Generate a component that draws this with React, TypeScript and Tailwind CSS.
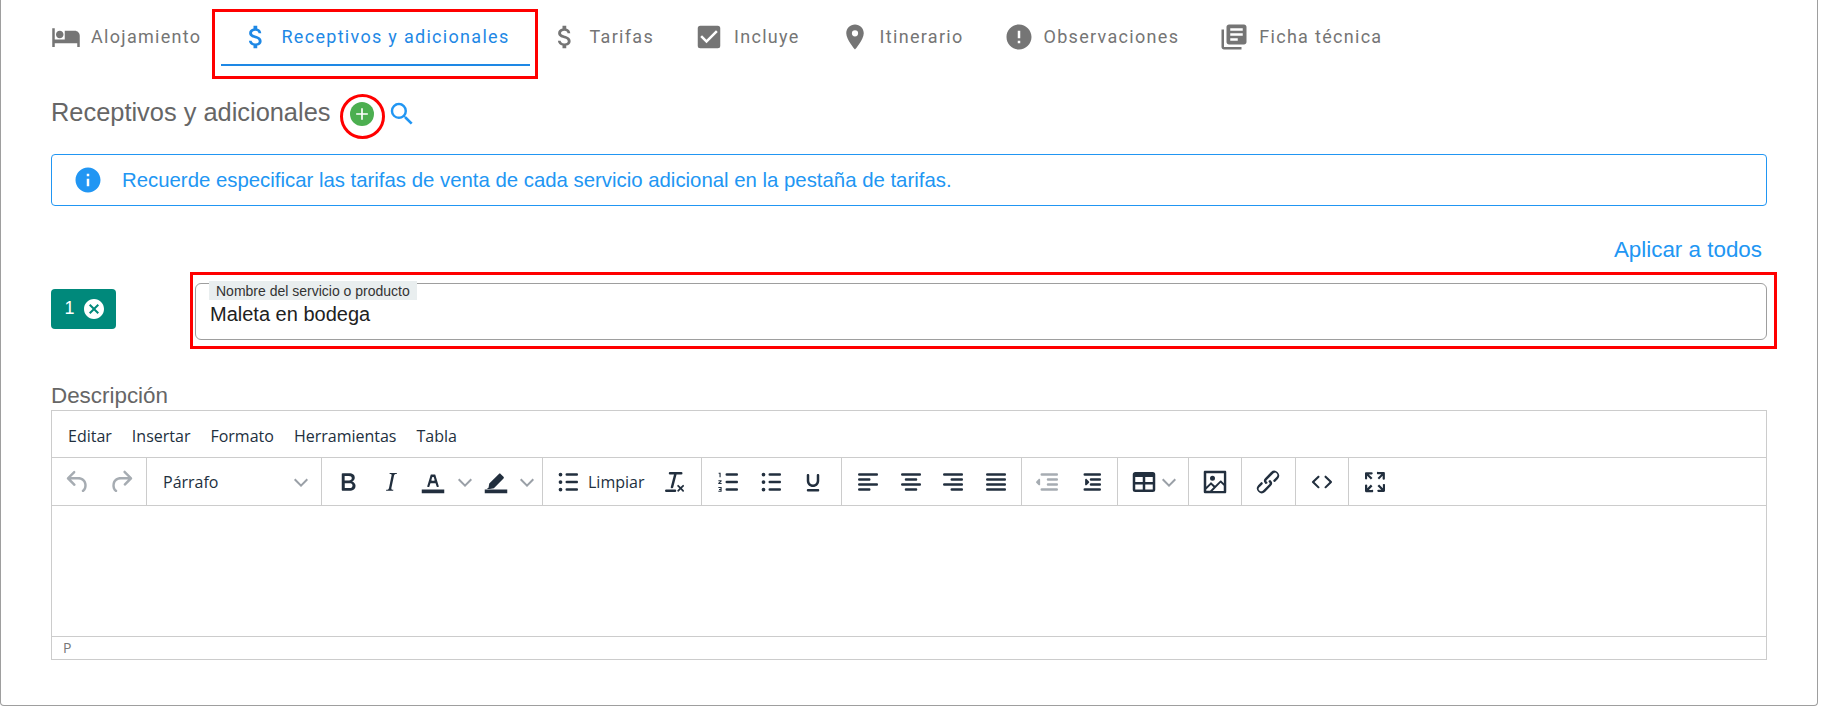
import {
  MdHotel,
  MdAttachMoney,
  MdCheckBox,
  MdLocationOn,
  MdError,
  MdLibraryBooks,
  MdSearch,
  MdInfo,
  MdCancel,
  MdAdd,
} from 'react-icons/md';
import type { ReactNode } from 'react';

const tabs = [
  { label: 'Alojamiento', icon: MdHotel },
  { label: 'Receptivos y adicionales', icon: MdAttachMoney, active: true },
  { label: 'Tarifas', icon: MdAttachMoney },
  { label: 'Incluye', icon: MdCheckBox },
  { label: 'Itinerario', icon: MdLocationOn },
  { label: 'Observaciones', icon: MdError },
  { label: 'Ficha técnica', icon: MdLibraryBooks },
];

const Icon = ({ d, faded }: { d: string; faded?: boolean }) => (
  <svg viewBox="0 0 24 24" className={`w-[30px] h-[30px] ${faded ? 'fill-[#a6acb2]' : 'fill-[#222f3e]'}`}>
    <path d={d} />
  </svg>
);

const Btn = ({ d, faded }: { d: string; faded?: boolean }) => (
  <div className="w-[42.5px] h-[38px] flex items-center justify-center shrink-0">
    <Icon d={d} faded={faded} />
  </div>
);

const Chevron = () => (
  <div className="w-[20px] flex justify-center shrink-0">
    <svg viewBox="0 0 10 10" className="w-[18px] h-[18px] fill-none stroke-[#9aa0a7] stroke-[1.1]">
      <path d="M1.500 3.500 5 7l3.500-3.500" />
    </svg>
  </div>
);

const Group = ({ w, last, children }: { w: string; last?: boolean; children: ReactNode }) => (
  <div className={`${w} ${last ? '' : 'border-r border-[#ccc]'} h-full pl-[5px] pt-[1px] flex items-center shrink-0`}>
    {children}
  </div>
);

const icons = {
  undo: 'M6.4 8H12c3.7 0 6.2 2 6.8 5.1.6 2.7-.4 5.6-2.3 6.8a1 1 0 0 1-1-1.8c1.1-.6 1.8-2.7 1.4-4.6-.5-2.1-2.1-3.5-4.9-3.5H6.4l3.3 3.3a1 1 0 1 1-1.4 1.4l-5-5a1 1 0 0 1 0-1.4l5-5a1 1 0 0 1 1.4 1.4L6.4 8z',
  redo: 'M17.6 10H12c-2.8 0-4.4 1.4-4.9 3.5-.4 2 .3 4 1.4 4.6a1 1 0 1 1-1 1.8c-2-1.2-2.9-4.1-2.3-6.8.6-3 3-5.1 6.8-5.1h5.6l-3.3-3.3a1 1 0 1 1 1.4-1.4l5 5a1 1 0 0 1 0 1.4l-5 5a1 1 0 0 1-1.4-1.4l3.3-3.3z',
  bold: 'M7.8 19c-.3 0-.5 0-.6-.2l-.2-.5V5.7c0-.2 0-.4.2-.5l.6-.2h5c1.5 0 2.7.3 3.5 1 .7.6 1.1 1.4 1.1 2.5a3 3 0 0 1-.6 1.9c-.4.6-1 1-1.6 1.2.4.1.9.3 1.3.6s.8.7 1 1.2c.4.4.5 1 .5 1.6 0 1.3-.4 2.3-1.3 3-.8.7-2.1 1-3.8 1H7.8zm5-8.3c.6 0 1.2-.1 1.6-.5.4-.3.6-.7.6-1.3 0-1.1-.8-1.7-2.3-1.7H9.3v3.5h3.4zm.5 6c.7 0 1.3-.1 1.7-.4.4-.4.6-.9.6-1.5s-.2-1-.7-1.4c-.4-.3-1-.4-2-.4H9.4v3.8h4z',
  italic: 'M16.7 4.7l-.1.9h-.3c-.6 0-1 0-1.4.3-.3.3-.4.6-.5 1.1l-2.1 9.8v.6c0 .5.4.8 1.4.8h.2l-.2.8H8l.2-.8h.2c1.1 0 1.8-.5 2-1.5l2-9.8.1-.5c0-.6-.4-.8-1.4-.8h-.3l.2-.9h5.8z',
  textColor: 'M3 18h18v3H3zM8.7 16h-.8a.5.5 0 0 1-.5-.6l2.7-9c.1-.3.3-.4.5-.4h2.8c.2 0 .4.1.5.4l2.7 9a.5.5 0 0 1-.5.6h-.8a.5.5 0 0 1-.4-.4l-.7-2.2c0-.3-.3-.4-.5-.4h-3.4c-.2 0-.4.1-.5.4l-.7 2.2c0 .3-.2.4-.4.4zm2.6-7.6l-.6 2a.5.5 0 0 0 .5.6h1.600a.5.5 0 0 0 .5-.6l-.6-2c0-.3-.3-.4-.5-.4h-.4c-.2 0-.4.1-.5.4z',
  highlight: 'M3 18h18v3H3zM6 16.500l.6-3.300 7.700-7.700c.4-.4 1-.4 1.400 0l2.300 2.300c.4.4.4 1 0 1.400l-7.700 7.700-3.300.6H4.600z',
  list: 'M11 5h8c.6 0 1 .4 1 1s-.4 1-1 1h-8a1 1 0 0 1 0-2zm0 6h8c.6 0 1 .4 1 1s-.4 1-1 1h-8a1 1 0 0 1 0-2zm0 6h8c.6 0 1 .4 1 1s-.4 1-1 1h-8a1 1 0 0 1 0-2zM6 4.500a1.500 1.500 0 1 1 0 3 1.500 1.500 0 0 1 0-3zm0 6a1.500 1.500 0 1 1 0 3 1.500 1.500 0 0 1 0-3zm0 6a1.500 1.500 0 1 1 0 3 1.500 1.500 0 0 1 0-3z',
  olist: 'M11 5h8c.6 0 1 .4 1 1s-.4 1-1 1h-8a1 1 0 0 1 0-2zm0 6h8c.6 0 1 .4 1 1s-.4 1-1 1h-8a1 1 0 0 1 0-2zm0 6h8c.6 0 1 .4 1 1s-.4 1-1 1h-8a1 1 0 0 1 0-2zM4.500 4.500h1.600v3.600h-.9V5.300h-.7zM4.300 10.500h2.600v.9L5.500 12.700h1.400v.8H4.200v-.8l1.600-1.400H4.300zM4.300 16h2.600v3.800H4.300v-.8h1.700v-.7H4.800v-.7h1.200v-.8H4.300z',
  clear: 'M13.200 6a1 1 0 0 1 0 .2l-2.600 10a1 1 0 0 1-1 .8h-.2a.8.8 0 0 1-.8-1l2.600-10H8a1 1 0 1 1 0-2h9a1 1 0 0 1 0 2h-3.800zM5 18h7a1 1 0 0 1 0 2H5a1 1 0 0 1 0-2zm13 1.500L16.500 18 15 19.500a.7.7 0 0 1-1-1l1.500-1.500-1.500-1.500a.7.7 0 0 1 1-1l1.500 1.500 1.500-1.500a.7.7 0 0 1 1 1L17.500 17l1.500 1.500a.7.7 0 0 1-1 1z',
  underline: 'M16 5.500c.6 0 1 .4 1 1V11c0 2.800-2.200 5-5 5s-5-2.200-5-5V6.500c0-.6.4-1 1-1s1 .4 1 1V11c0 1.700 1.300 3 3 3s3-1.300 3-3V6.500c0-.6.4-1 1-1zM8 17.600h8c.6 0 1 .4 1 1s-.4 1-1 1H8a1 1 0 0 1 0-2z',
  alignLeft: 'M5 5h14c.6 0 1 .4 1 1s-.4 1-1 1H5a1 1 0 1 1 0-2zm0 4h8c.6 0 1 .4 1 1s-.4 1-1 1H5a1 1 0 0 1 0-2zm0 8h8c.6 0 1 .4 1 1s-.4 1-1 1H5a1 1 0 0 1 0-2zm0-4h14c.6 0 1 .4 1 1s-.4 1-1 1H5a1 1 0 0 1 0-2z',
  alignCenter: 'M5 5h14c.6 0 1 .4 1 1s-.4 1-1 1H5a1 1 0 1 1 0-2zm3 4h8c.6 0 1 .4 1 1s-.4 1-1 1H8a1 1 0 1 1 0-2zm0 8h8c.6 0 1 .4 1 1s-.4 1-1 1H8a1 1 0 0 1 0-2zm-3-4h14c.6 0 1 .4 1 1s-.4 1-1 1H5a1 1 0 0 1 0-2z',
  alignRight: 'M5 5h14c.6 0 1 .4 1 1s-.4 1-1 1H5a1 1 0 1 1 0-2zm6 4h8c.6 0 1 .4 1 1s-.4 1-1 1h-8a1 1 0 0 1 0-2zm0 8h8c.6 0 1 .4 1 1s-.4 1-1 1h-8a1 1 0 0 1 0-2zm-6-4h14c.6 0 1 .4 1 1s-.4 1-1 1H5a1 1 0 0 1 0-2z',
  justify: 'M5 5h14c.6 0 1 .4 1 1s-.4 1-1 1H5a1 1 0 1 1 0-2zm0 4h14c.6 0 1 .4 1 1s-.4 1-1 1H5a1 1 0 1 1 0-2zm0 4h14c.6 0 1 .4 1 1s-.4 1-1 1H5a1 1 0 0 1 0-2zm0 4h14c.6 0 1 .4 1 1s-.4 1-1 1H5a1 1 0 0 1 0-2z',
  outdent: 'M7 5h12c.6 0 1 .4 1 1s-.4 1-1 1H7a1 1 0 1 1 0-2zm5 4h7c.6 0 1 .4 1 1s-.4 1-1 1h-7a1 1 0 0 1 0-2zm0 4h7c.6 0 1 .4 1 1s-.4 1-1 1h-7a1 1 0 0 1 0-2zm-5 4h12a1 1 0 0 1 0 2H7a1 1 0 0 1 0-2zm-2.600-2.600L2.800 12.800a1 1 0 0 1 0-1.500L4.400 9.700c.5-.5 1.300-.2 1.300.5v3.700c0 .7-.8 1-1.300.5z',
  indent: 'M7 5h12c.6 0 1 .4 1 1s-.4 1-1 1H7a1 1 0 1 1 0-2zm5 4h7c.6 0 1 .4 1 1s-.4 1-1 1h-7a1 1 0 0 1 0-2zm0 4h7c.6 0 1 .4 1 1s-.4 1-1 1h-7a1 1 0 0 1 0-2zm-5 4h12a1 1 0 0 1 0 2H7a1 1 0 0 1 0-2zm1.600-2.600l1.600-1.600a1 1 0 0 0 0-1.500L8.600 9.700c-.5-.5-1.300-.2-1.300.5v3.700c0 .7.8 1 1.300.5z',
  table: 'M19 4a2 2 0 0 1 2 2v12a2 2 0 0 1-2 2H5a2 2 0 0 1-2-2V6c0-1.100.9-2 2-2h14zM5 14v4h6v-4H5zm14 0h-6v4h6v-4zm0-6h-6v4h6V8zM5 12h6V8H5v4z',
  image: 'M5 15.700l3.300-3.200c.3-.3.7-.3 1 0L12 15l4.100-4c.3-.4.8-.4 1 0l2 1.900V5H5v10.700zM5 18V19h3l2.800-2.900-2-2L5 17.900zm14-3l-2.500-2.400-6.400 6.500H19v-4zM4 3h16c.6 0 1 .4 1 1v16c0 .6-.4 1-1 1H4a1 1 0 0 1-1-1V4c0-.6.4-1 1-1zm6 8a2 2 0 1 0 0-4 2 2 0 0 0 0 4z',
  link: 'M6.200 12.300a1 1 0 0 1 1.400 1.400l-2 2a2 2 0 1 0 2.600 2.800l4.800-4.800a1 1 0 0 0 0-1.400 1 1 0 1 1 1.400-1.300 2.900 2.900 0 0 1 0 4L9.600 20a3.900 3.900 0 0 1-5.500-5.500l2-2zm11.600-.6a1 1 0 0 1-1.400-1.400l2-2a2 2 0 1 0-2.600-2.800L11 10.300a1 1 0 0 0 0 1.400A1 1 0 1 1 9.600 13a2.900 2.900 0 0 1 0-4L14.400 4a3.900 3.900 0 0 1 5.500 5.500l-2 2z',
  code: 'M9.800 15.700c.3.3.3.8 0 1-.3.4-.9.4-1.200 0l-4.400-4.100a.8.8 0 0 1 0-1.200l4.400-4.200c.3-.3.9-.3 1.200 0 .3.3.3.8 0 1.100L6 12l3.800 3.700zM14.200 15.700c-.3.3-.3.8 0 1 .4.4.9.4 1.200 0l4.400-4.100c.3-.3.3-.9 0-1.200l-4.400-4.200a.8.8 0 0 0-1.200 0c-.3.3-.3.8 0 1.100L18 12l-3.800 3.700z',
  fullscreen: 'M15.300 10l-1.200-1.300 2.900-3h-2.300a.9.9 0 1 1 0-1.700H19c.5 0 .9.4.9.9v4.400a.9.9 0 1 1-1.800 0V7l-2.900 3zm0 4l3 3v-2.300a.9.9 0 1 1 1.700 0V19c0 .5-.4.9-.9.9h-4.400a.9.9 0 0 1 0-1.800H17l-3-2.900 1.300-1.200zM10 15.400l-2.900 3h2.300a.9.9 0 1 1 0 1.700H5a.9.9 0 0 1-1-.9v-4.400a.9.9 0 1 1 1.800 0V17l2.900-3 1.200 1.300zM8.700 10L5.700 7v2.300a.9.9 0 0 1-1.700 0V5c0-.5.4-.9.9-.9h4.400a.9.9 0 0 1 0 1.800H7l3 2.900-1.300 1.200z',
};

const App = () => {
  return (
    <div className="w-full bg-white font-['Liberation_Sans',sans-serif]">
      <div className="mr-[10px] h-[706px] border-x border-b border-[#9e9e9e] rounded-b-[4px] px-[50px]">
        {/* tabs */}
        <div className="flex -ml-[20px] h-[66px]">
          {tabs.map((t) => (
            <div
              key={t.label}
              className={`relative flex gap-[10px] px-[20px] pt-[22px] font-['Roboto',sans-serif] text-[18px] tracking-[1.3px] ${
                t.active ? 'text-[#1e88e5] border-b-2 border-[#1e88e5]' : 'text-[#757575]'
              }`}
            >
              <t.icon className="w-[30px] h-[30px]" />
              <span className="leading-[30px]">{t.label}</span>
              {t.active && (
                <div className="absolute left-[-9px] right-[-8px] top-[9px] h-[70px] border-[3px] border-[#ff0000]" />
              )}
            </div>
          ))}
        </div>

        {/* title */}
        <div className="flex items-center h-[48px] mt-[24px]">
          <span className="text-[25.4px] text-[#666] mb-[4px]">Receptivos y adicionales</span>
          <div className="relative ml-[20px] w-[24px] h-[24px] rounded-full bg-[#4caf50] flex items-center justify-center">
            <MdAdd className="w-[20px] h-[20px] text-white" />
            <div className="absolute left-[-10px] top-[-8px] w-[45px] h-[45px] rounded-full border-[3px] border-[#ff0000]" />
          </div>
          <MdSearch className="ml-[13px] w-[30px] h-[30px] text-[#2196f3]" />
        </div>

        {/* alert */}
        <div className="mt-[16px] h-[52px] border border-[#2196f3] rounded-[4px] flex items-center pl-[21px] text-[#2196f3]">
          <MdInfo className="w-[30px] h-[30px]" />
          <span className="ml-[19px] text-[20.37px]">
            Recuerde especificar las tarifas de venta de cada servicio adicional en la pestaña de tarifas.
          </span>
        </div>

        <div className="mt-[32px] text-right pr-[5px] text-[22.4px] leading-[23px] text-[#2196f3]">Aplicar a todos</div>

        {/* nombre */}
        <div className="flex items-center mt-[22px]">
          <div className="w-[65px] h-[40px] bg-[#00897b] rounded-[4px] flex items-center justify-center gap-[7px] pl-[3px] text-white text-[18px] mt-[-6px]">
            <span>1</span>
            <MdCancel className="w-[24px] h-[24px]" />
          </div>
          <div className="relative ml-[79px] flex-1 h-[57px] border border-[#9e9e9e] rounded-[6px] pl-[14px] pt-[16px] text-[20px] leading-[28px] text-[#212121]">
            <span className="absolute left-[13px] top-[-3px] h-[19px] px-[7px] bg-[#e9eeef] text-[14px] leading-[21px] text-[#333]">
              Nombre del servicio o producto
            </span>
            Maleta en bodega
            <div className="absolute left-[-6px] right-[-11px] top-[-12px] bottom-[-10px] border-[3px] border-[#ff0000]" />
          </div>
        </div>

        <div className="mt-[44px] text-[22.4px] leading-[24px] text-[#666]">Descripción</div>

        {/* editor */}
        <div className="mt-[2px] h-[250px] border border-[#ccc] flex flex-col font-['Open_Sans',sans-serif] text-[#222f3e]">
          <div className="h-[47px] shrink-0 flex items-center pl-[16px] pt-[3px] gap-[20px] text-[16px] border-b border-[#ccc]">
            <span>Editar</span>
            <span>Insertar</span>
            <span>Formato</span>
            <span>Herramientas</span>
            <span>Tabla</span>
          </div>
          <div className="h-[48px] shrink-0 flex items-center border-b border-[#ccc]">
            <Group w="w-[95px]">
              <Btn d={icons.undo} faded />
              <Btn d={icons.redo} faded />
            </Group>
            <Group w="w-[175px]">
              <div className="flex items-center w-full pl-[11px] pr-[10px] justify-between text-[16px]">
                <span>Párrafo</span>
                <Chevron />
              </div>
            </Group>
            <Group w="w-[221px]">
              <Btn d={icons.bold} />
              <Btn d={icons.italic} />
              <Btn d={icons.textColor} />
              <Chevron />
              <Btn d={icons.highlight} />
              <Chevron />
            </Group>
            <Group w="w-[159px]">
              <div className="w-[106px] flex items-center shrink-0 pl-[5px] gap-[5px] text-[16px]">
                <Icon d={icons.list} />
                <span>Limpiar</span>
              </div>
              <Btn d={icons.clear} />
            </Group>
            <Group w="w-[140px]">
              <Btn d={icons.olist} />
              <Btn d={icons.list} />
              <Btn d={icons.underline} />
            </Group>
            <Group w="w-[180px]">
              <Btn d={icons.alignLeft} />
              <Btn d={icons.alignCenter} />
              <Btn d={icons.alignRight} />
              <Btn d={icons.justify} />
            </Group>
            <Group w="w-[96px]">
              <Btn d={icons.outdent} faded />
              <Btn d={icons.indent} />
            </Group>
            <Group w="w-[71px]">
              <Btn d={icons.table} />
              <div className="-ml-[7px]">
                <Chevron />
              </div>
            </Group>
            <Group w="w-[53px]">
              <Btn d={icons.image} />
            </Group>
            <Group w="w-[54px]">
              <Btn d={icons.link} />
            </Group>
            <Group w="w-[53px]">
              <Btn d={icons.code} />
            </Group>
            <Group w="w-[53px]" last>
              <Btn d={icons.fullscreen} />
            </Group>
          </div>
          <div className="flex-1" />
          <div className="h-[23px] shrink-0 border-t border-[#ccc] pl-[11px] text-[14px] leading-[21px] text-[#777]">P</div>
        </div>
      </div>
    </div>
  );
};
export default App;
